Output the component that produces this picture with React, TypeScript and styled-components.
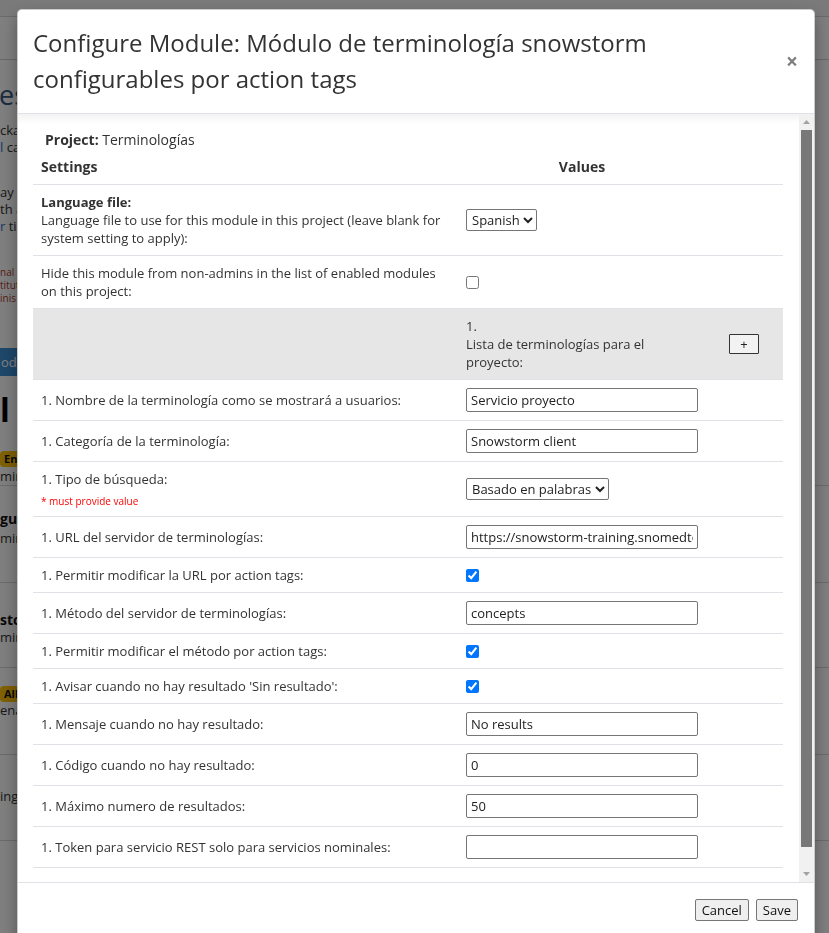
import React from "react";
import styled, { createGlobalStyle } from "styled-components";

const Global = createGlobalStyle`
  html, body { margin: 0; padding: 0; height: 100%; overflow: hidden; }
  body { font-family: "Open Sans", "Liberation Sans", sans-serif; background: #fff; }
  * { box-sizing: border-box; }
`;

/* ---------- background page (dimmed by the backdrop) ---------- */
const Page = styled.div`
  width: 829px;
  height: 933px;
  overflow: hidden;
  display: flex;
  flex-direction: column;
  font-size: 13px;
  color: #333;
  white-space: nowrap;
`;
const TopNav = styled.div`
  flex: none;
  height: 17px;
  background: #f5f5f5;
  border-bottom: 1px solid #d4d4d4;
`;
const SubBar = styled.div`
  flex: none;
  height: 43px;
  background: #fff;
  border-bottom: 1px solid #d0d0d0;
`;
const PageHeading = styled.div`
  font-size: 27px;
  line-height: 30px;
  color: #3a5880;
  margin: 20px 0 0 -1px;
`;
const PageText = styled.div<{ $top?: number }>`
  line-height: 17px;
  margin-top: ${(p) => p.$top ?? 0}px;
  color: #333;
`;
const PageLink = styled.span`
  color: #2a6fd0;
`;
const Warn = styled.div<{ $top?: number }>`
  font-size: 10px;
  line-height: 13px;
  color: #b03a30;
  margin-top: ${(p) => p.$top ?? 0}px;
`;
const PageButton = styled.div`
  margin-top: 43px;
  height: 28px;
  width: 60px;
  background: #3c8ed4;
  color: #fff;
  line-height: 28px;
  padding-left: 1px;
  font-size: 13px;
`;
const BigBold = styled.div`
  margin-top: 16px;
  font-size: 32px;
  line-height: 36px;
  font-weight: 700;
  color: #000;
`;
const Badge = styled.div<{ $top?: number }>`
  margin-top: ${(p) => p.$top ?? 0}px;
  align-self: flex-start;
  height: 16px;
  line-height: 16px;
  background: #ffc107;
  color: #111;
  font-size: 11px;
  font-weight: 700;
  padding: 0 4px;
  border-radius: 4px;
`;
const ListItem = styled.div<{ $h: number; $pt: number }>`
  flex: none;
  height: ${(p) => p.$h}px;
  padding-top: ${(p) => p.$pt}px;
  border-top: 1px solid #d6d6d6;
  display: flex;
  flex-direction: column;
`;
const ItemTitle = styled.div`
  font-weight: 700;
  font-size: 14px;
  line-height: 18px;
  color: #111;
`;

/* ---------- modal ---------- */
const Backdrop = styled.div`
  position: fixed;
  inset: 0;
  background: rgba(0, 0, 0, 0.5);
`;
const Dialog = styled.div`
  position: fixed;
  top: 9px;
  left: 17px;
  width: 798px;
  background: #fff;
  border: 1px solid rgba(0, 0, 0, 0.2);
  border-radius: 5px;
  box-shadow: 0 8px 16px rgba(0, 0, 0, 0.35);
  display: flex;
  flex-direction: column;
  color: #333;
  font-size: 13px;
`;
const Header = styled.div`
  display: flex;
  align-items: center;
  padding: 15px 16px 16px 15px;
  border-bottom: 1px solid #dee2e6;
`;
const Title = styled.h4`
  margin: 0;
  flex: 1;
  font-size: 24px;
  line-height: 36px;
  font-weight: 400;
  color: #333;
`;
const Close = styled.button`
  margin: -16px -16px -16px auto;
  padding: 16px;
  border: 0;
  background: transparent;
  font-family: "Open Sans", "Liberation Sans", sans-serif;
  font-size: 21px;
  line-height: 1;
  font-weight: 700;
  color: #000;
  opacity: 0.5;
`;
const BodyFrame = styled.div`
  height: 768px;
  display: flex;
`;
const Body = styled.div`
  flex: 1;
  min-width: 0;
  overflow: hidden;
  padding: 16px 16px 16px 15px;
  background: linear-gradient(#f3f3f3, #fff 10px);
`;
const ScrollTrack = styled.div`
  flex: none;
  width: 15px;
  background: #f1f1f1;
  display: flex;
  flex-direction: column;
`;
const ScrollArrow = styled.div`
  flex: none;
  height: 16px;
  display: flex;
  align-items: center;
  justify-content: center;
`;
const ScrollThumb = styled.div<{ $h: number }>`
  flex: none;
  height: ${(p) => p.$h}px;
  margin: 0 2px;
  background: #787878;
`;
const ScrollRest = styled.div`
  flex: 1;
`;
const ProjectLine = styled.div`
  padding-left: 12px;
  font-size: 14px;
  line-height: 20px;
  margin-bottom: 1px;
`;
const Strong = styled.b`
  font-weight: 700;
`;
const Table = styled.div`
  margin-bottom: 16px;
`;
const Row = styled.div<{ $shade?: boolean; $head?: boolean }>`
  display: grid;
  grid-template-columns: 425px 248px 76px;
  align-items: center;
  border-bottom: 1px solid #dee2e6;
  background: ${(p) => (p.$shade ? "#e6e6e6" : "transparent")};
  font-weight: ${(p) => (p.$head ? 700 : 400)};
`;
const LabelCell = styled.div`
  padding: 8px;
  line-height: 18px;
`;
const HeadCell = styled.div<{ $center?: boolean }>`
  padding: 7px 8px 8px;
  line-height: 18px;
  font-size: 14px;
  text-align: ${(p) => (p.$center ? "center" : "left")};
`;
const ValueCell = styled.div<{ $span?: number }>`
  padding: 8px;
  display: flex;
  align-items: center;
  line-height: 18px;
  grid-column: span ${(p) => p.$span ?? 1};
`;
const RepeatText = styled.div`
  padding: 8px;
  line-height: 18px;
`;
const AddCell = styled.div`
  display: flex;
  align-items: center;
  justify-content: center;
`;
const Required = styled.div`
  margin-top: 6px;
  font-size: 10px;
  line-height: 14px;
  color: #f00;
`;
const TextInput = styled.input`
  width: 232px;
  height: 24px;
  border: 1px solid #767676;
  border-radius: 2px;
  padding: 1px 4px;
  font-family: "Open Sans", "Liberation Sans", sans-serif;
  font-size: 13px;
  color: #222;
  background: #fff;
`;
const Select = styled.select`
  height: 22px;
  border: 1px solid #767676;
  border-radius: 2px;
  font-family: "Open Sans", "Liberation Sans", sans-serif;
  font-size: 13px;
  color: #222;
  background: #fff;
  padding: 0 0 0 1px;
`;
const Check = styled.input`
  margin: 0;
  width: 13px;
  height: 13px;
`;
const SmallButton = styled.button`
  width: 30px;
  height: 20px;
  padding: 0;
  background: #f2f2f2;
  border: 1px solid #333;
  border-radius: 1px;
  font-family: "Open Sans", "Liberation Sans", sans-serif;
  font-size: 13px;
  line-height: 16px;
  color: #222;
`;
const Footer = styled.div`
  display: flex;
  justify-content: flex-end;
  gap: 7px;
  padding: 16px;
  border-top: 1px solid #dee2e6;
`;
const FooterButton = styled.button`
  height: 22px;
  padding: 0 6px;
  background: #efefef;
  border: 1px solid #767676;
  border-radius: 2px;
  font-family: "Open Sans", "Liberation Sans", sans-serif;
  font-size: 13px;
  line-height: 18px;
  color: #111;
`;

type Field =
  | { kind: "input"; label: string; value: string }
  | { kind: "select"; label: string; value: string; required?: boolean }
  | { kind: "check"; label: string; checked: boolean };

const fields: Field[] = [
  { kind: "input", label: "1. Nombre de la terminología como se mostrará a usuarios:", value: "Servicio proyecto" },
  { kind: "input", label: "1. Categoría de la terminología:", value: "Snowstorm client" },
  { kind: "select", label: "1. Tipo de búsqueda:", value: "Basado en palabras", required: true },
  { kind: "input", label: "1. URL del servidor de terminologías:", value: "https://snowstorm-training.snomedtools.org/fhir" },
  { kind: "check", label: "1. Permitir modificar la URL por action tags:", checked: true },
  { kind: "input", label: "1. Método del servidor de terminologías:", value: "concepts" },
  { kind: "check", label: "1. Permitir modificar el método por action tags:", checked: true },
  { kind: "check", label: "1. Avisar cuando no hay resultado 'Sin resultado':", checked: true },
  { kind: "input", label: "1. Mensaje cuando no hay resultado:", value: "No results" },
  { kind: "input", label: "1. Código cuando no hay resultado:", value: "0" },
  { kind: "input", label: "1. Máximo numero de resultados:", value: "50" },
  { kind: "input", label: "1. Token para servicio REST solo para servicios nominales:", value: "" },
];

function FieldRow({ f }: { f: Field }) {
  return (
    <Row>
      <LabelCell>
        {f.label}
        {f.kind === "select" && f.required && <Required>* must provide value</Required>}
      </LabelCell>
      <ValueCell $span={2}>
        {f.kind === "input" && <TextInput type="text" defaultValue={f.value} />}
        {f.kind === "select" && (
          <Select defaultValue={f.value}>
            <option>Basado en palabras</option>
            <option>Basado en ECL</option>
          </Select>
        )}
        {f.kind === "check" && <Check type="checkbox" defaultChecked={f.checked} />}
      </ValueCell>
    </Row>
  );
}

function Arrow({ down }: { down?: boolean }) {
  return (
    <ScrollArrow>
      <svg width="7" height="4" viewBox="0 0 7 4" aria-hidden="true">
        <path d={down ? "M0 0h7L3.5 4z" : "M0 4h7L3.5 0z"} fill="#a3a3a3" />
      </svg>
    </ScrollArrow>
  );
}

export default function App() {
  return (
    <>
      <Global />
      <Page>
        <TopNav />
        <SubBar />
        <PageHeading>es</PageHeading>
        <PageText $top={12}>cka</PageText>
        <PageText>
          <PageLink>l</PageLink> ca
        </PageText>
        <PageText $top={28}>ay e</PageText>
        <PageText>th a</PageText>
        <PageText>
          <PageLink>r</PageLink> tin
        </PageText>
        <Warn $top={31}>nal l</Warn>
        <Warn>titut</Warn>
        <Warn>inis</Warn>
        <PageButton>odu</PageButton>
        <BigBold>l n</BigBold>
        <Badge $top={23}>En</Badge>
        <PageText $top={1}>min</PageText>
        <ListItem $h={97} $pt={24}>
          <ItemTitle>gur</ItemTitle>
          <PageText $top={2}>min</PageText>
        </ListItem>
        <ListItem $h={85} $pt={28}>
          <ItemTitle>sto</ItemTitle>
          <PageText>min</PageText>
        </ListItem>
        <ListItem $h={87} $pt={18}>
          <Badge>All P</Badge>
          <PageText>ena</PageText>
        </ListItem>
        <ListItem $h={86} $pt={33}>
          <PageText>ing</PageText>
        </ListItem>
        <ListItem $h={80} $pt={0} />
      </Page>

      <Backdrop />
      <Dialog role="dialog">
        <Header>
          <Title>Configure Module: Módulo de terminología snowstorm configurables por action tags</Title>
          <Close aria-label="Close">×</Close>
        </Header>
        <BodyFrame>
          <Body>
            <ProjectLine>
              <Strong>Project:</Strong> Terminologías
            </ProjectLine>
            <Table>
              <Row $head>
                <HeadCell>Settings</HeadCell>
                <HeadCell $center>Values</HeadCell>
                <HeadCell />
              </Row>
              <Row>
                <LabelCell>
                  <Strong>Language file:</Strong>
                  <br />
                  Language file to use for this module in this project (leave blank for system setting to apply):
                </LabelCell>
                <ValueCell $span={2}>
                  <Select defaultValue="Spanish">
                    <option>English</option>
                    <option>Spanish</option>
                  </Select>
                </ValueCell>
              </Row>
              <Row>
                <LabelCell>Hide this module from non-admins in the list of enabled modules on this project:</LabelCell>
                <ValueCell $span={2}>
                  <Check type="checkbox" />
                </ValueCell>
              </Row>
              <Row $shade>
                <LabelCell />
                <RepeatText>
                  1.
                  <br />
                  Lista de terminologías para el proyecto:
                </RepeatText>
                <AddCell>
                  <SmallButton>+</SmallButton>
                </AddCell>
              </Row>
              {fields.map((f, i) => (
                <FieldRow key={i} f={f} />
              ))}
            </Table>
          </Body>
          <ScrollTrack aria-hidden="true">
            <Arrow />
            <ScrollThumb $h={717} />
            <ScrollRest />
            <Arrow down />
          </ScrollTrack>
        </BodyFrame>
        <Footer>
          <FooterButton>Cancel</FooterButton>
          <FooterButton>Save</FooterButton>
        </Footer>
      </Dialog>
    </>
  );
}
